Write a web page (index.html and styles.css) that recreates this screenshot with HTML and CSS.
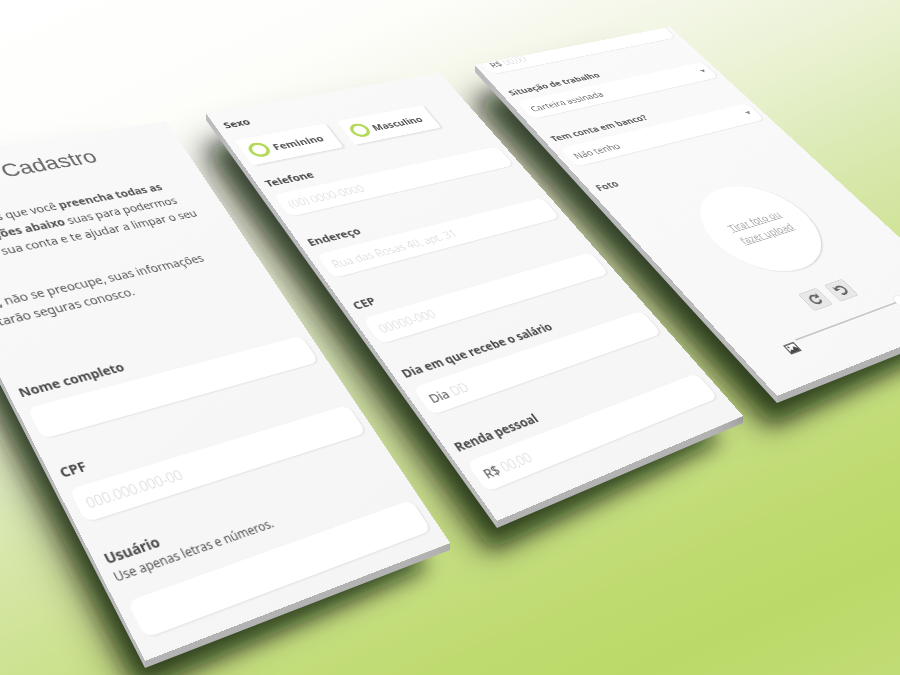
FILE: index.html
```
<!DOCTYPE html>
<html lang="pt-BR">
<head>
<meta charset="utf-8">
<title>Cadastro</title>
<link rel="stylesheet" href="styles.css">
</head>
<body>
<form class="scene">
  <svg class="depth" aria-hidden="true">
    <defs>
      <filter id="soft" x="-20%" y="-20%" width="140%" height="140%"><feGaussianBlur stdDeviation="11"/></filter>
      <filter id="wide" x="-30%" y="-30%" width="160%" height="160%"><feGaussianBlur stdDeviation="20"/></filter>
    </defs>
  </svg>

  <section class="panel panel-intro" data-corners="-109,164 166,121 450,543 145,661">
    <h1 class="title">Cadastro</h1>
    <p class="text">Precisamos que você <b>preencha todas as informações abaixo</b> suas para podermos aprovar sua conta e te ajudar a limpar o seu nome.</p>
    <p class="text"><b>Olá,</b> não se preocupe, suas informações estarão seguras conosco.</p>
    <div class="group">
      <label class="label" for="nome">Nome completo</label>
      <div class="field"><input class="input" id="nome" type="text"></div>
    </div>
    <div class="group">
      <label class="label" for="cpf">CPF</label>
      <div class="field"><input class="input" id="cpf" type="text" placeholder="000.000.000-00"></div>
    </div>
    <div class="group">
      <label class="label" for="usuario">Usuário</label>
      <p class="hint">Use apenas letras e números.</p>
      <div class="field"><input class="input" id="usuario" type="text"></div>
    </div>
  </section>

  <section class="panel panel-data" data-corners="206,113 440,73 743,416 497,521">
    <div class="group" role="radiogroup" aria-labelledby="sexo">
      <span class="label" id="sexo">Sexo</span>
      <div class="choices">
        <label class="choice"><input class="radio" type="radio" name="sexo">Feminino</label>
        <label class="choice"><input class="radio" type="radio" name="sexo">Masculino</label>
      </div>
    </div>
    <div class="group">
      <label class="label" for="telefone">Telefone</label>
      <div class="field"><input class="input" id="telefone" type="text" placeholder="(00) 0000-0000"></div>
    </div>
    <div class="group">
      <label class="label" for="endereco">Endereço</label>
      <div class="field"><input class="input" id="endereco" type="text" placeholder="Rua das Rosas 40, apt. 31"></div>
    </div>
    <div class="group">
      <label class="label" for="cep">CEP</label>
      <div class="field"><input class="input" id="cep" type="text" placeholder="00000-000"></div>
    </div>
    <div class="group">
      <label class="label" for="dia">Dia em que recebe o salário</label>
      <div class="field"><span>Dia</span><input class="input" id="dia" type="text" placeholder="DD"></div>
    </div>
    <div class="group">
      <label class="label" for="renda">Renda pessoal</label>
      <div class="field"><span>R$</span><input class="input" id="renda" type="text" placeholder="00,00"></div>
    </div>
  </section>

  <section class="panel panel-photo" data-corners="475,65 670,27 983,314 777,396">
    <div class="group">
      <div class="field"><span>R$</span><input class="input" type="text" placeholder="00,00" aria-label="Renda"></div>
    </div>
    <div class="group">
      <label class="label" for="trabalho">Situação de trabalho</label>
      <div class="field"><select class="input" id="trabalho"><option>Carteira assinada</option></select><i class="caret"></i></div>
    </div>
    <div class="group">
      <label class="label" for="banco">Tem conta em banco?</label>
      <div class="field"><select class="input" id="banco"><option>Não tenho</option></select><i class="caret"></i></div>
    </div>
    <div class="group">
      <span class="label">Foto</span>
      <button class="photo" type="button">Tirar foto ou fazer upload</button>
      <div class="tools">
        <button class="tool" type="button" aria-label="Girar para a direita">
          <svg viewBox="0 0 16 16"><path d="M13 10.200A5.400 5.400 0 1 1 11.600 4.100" fill="none" stroke="#666" stroke-width="2.400"/><path d="M14.600 1v6.200H8.400z" fill="#666"/></svg>
        </button>
        <button class="tool" type="button" aria-label="Girar para a esquerda">
          <svg viewBox="0 0 16 16"><path d="M4.500 12.200A5.400 5.400 0 1 0 4.400 4.100" fill="none" stroke="#666" stroke-width="2.400"/><path d="M1.400 1v6.200h6.200z" fill="#666"/></svg>
        </button>
      </div>
      <div class="zoom">
        <svg class="zoom-icon" viewBox="0 0 16 14"><path d="M1 1h14v12H1z" fill="#fff" stroke="#444" stroke-width="1.500"/><path d="M2 12.500V10.500l3-2.500 2 1.500L10.500 5 14 9v3.500z" fill="#444"/><circle cx="4.500" cy="4.500" r="1.200" fill="#444"/></svg>
        <input class="slider" type="range" min="0" max="100" value="100" aria-label="Zoom">
      </div>
    </div>
  </section>
</form>
<script src="scene.js"></script>
</body>
</html>
```
FILE: styles.css
```
* {
  box-sizing: border-box;
}

body {
  margin: 0;
  min-height: 100vh;
  overflow: hidden;
  background: linear-gradient(156deg, #fff 0%, #fdfdfa 18%, #f2f6e4 30%, #e9f1d0 39%, #dcebb8 47%, #d5e6a5 54%, #cce28f 64%, #c4de7e 72%, #bfdb70 80%, #bbd968 89%, #c1dc75 100%);
  color: #555;
  font: 14px/23px "Noto Sans", "Open Sans", sans-serif;
}

.scene {
  position: relative;
  min-height: 100vh;
  overflow: hidden;
}

.depth {
  position: absolute;
  inset: 0;
  width: 100%;
  height: 100%;
}

.shadow {
  fill: #080a00;
  fill-opacity: 0.68;
  filter: url(#soft);
}

.haze {
  fill: #101400;
  fill-opacity: 0.36;
  filter: url(#wide);
}

.side {
  fill: #bbbbbd;
}

.base {
  fill: #b3b3b4;
}

.face {
  fill: #f7f7f7;
}

/* Each sheet lies on the tilted plane given by its data-corners. */
.panel {
  position: absolute;
  top: 0;
  left: 0;
  width: 332px;
  height: 596px;
  padding: 16px 10px;
  display: flex;
  flex-direction: column;
  gap: 32px;
  overflow: hidden;
  transform-origin: 0 0;
  background: linear-gradient(160deg, #f9f9f9, #f5f5f5);
}

.panel-intro {
  display: block;
  width: 336px;
  padding: 20px 10px;
}

.panel-photo {
  padding: 0 9px 0 11px;
  background: linear-gradient(160deg, #fafafa, #f7f7f7);
  color: #777;
}

.panel-photo .group:first-child {
  margin-top: -12px;
}

.title {
  margin: 0 0 33px;
  font: 28px/32px "Liberation Sans", Arial, sans-serif;
  text-align: center;
  color: #666;
}

.text {
  margin: 0 12px 16px 0;
}

.panel-intro .group {
  margin-bottom: 29px;
}

.text + .group {
  margin-top: 64px;
}

.label {
  display: block;
  margin-bottom: 8px;
  line-height: 20px;
  font-weight: 700;
  color: #4a4a4a;
}

.panel-photo .label {
  color: #606060;
}

.hint {
  margin: -8px 0 15px;
  font-size: 12px;
  line-height: 18px;
}

.field {
  display: flex;
  align-items: center;
  gap: 4px;
  height: 36px;
  padding: 0 9px;
  border-radius: 9px;
  background: #fff;
  box-shadow: 1px 1px 2px rgba(0, 0, 0, 0.09);
}

.input {
  flex: 1;
  min-width: 0;
  padding: 0;
  border: 0;
  outline: 0;
  appearance: none;
  background: none;
  color: inherit;
  font: inherit;
}

.input::placeholder {
  color: #d6d6d6;
  font-weight: 300;
  opacity: 1;
}

.caret {
  border: 4px solid transparent;
  border-top: 6px solid #888;
  border-bottom: 0;
}

.choices {
  display: flex;
  gap: 16px;
  margin: 16px 0 -10px;
}

.choice {
  display: flex;
  align-items: center;
  gap: 6px;
  height: 44px;
  padding: 0 16px 0 8px;
  border-radius: 4px;
  background: #fff;
  box-shadow: 2px 2px 3px rgba(0, 0, 0, 0.1);
  font-weight: 700;
}

.radio {
  appearance: none;
  width: 24px;
  height: 24px;
  margin: 0;
  border: 4px solid #b4d957;
  border-radius: 50%;
}

.photo {
  display: block;
  width: 148px;
  height: 148px;
  margin: 41px auto 31px;
  padding: 0 30px;
  border: 0;
  border-radius: 50%;
  background: #fff;
  box-shadow: 1px 1px 2px rgba(0, 0, 0, 0.16);
  color: #aaa;
  font: inherit;
  text-decoration: underline;
}

.tools {
  display: flex;
  justify-content: center;
  gap: 12px;
}

.tool {
  display: grid;
  place-items: center;
  width: 30px;
  height: 28px;
  padding: 0;
  border: 1px solid #d2d2d2;
  border-radius: 3px;
  background: #e8e8e8;
}

.tool svg {
  width: 18px;
  height: 18px;
}

.zoom {
  display: flex;
  align-items: flex-start;
  gap: 4px;
  margin: 18px 68px 0 46px;
}

.zoom-icon {
  flex: none;
  width: 16px;
  height: 14px;
  margin-top: 9px;
}

.slider {
  flex: 1;
  min-width: 0;
  height: 16px;
  margin: 0;
  appearance: none;
  background: linear-gradient(#c6c6c6, #c6c6c6) center / 100% 2px no-repeat;
}

.slider::-webkit-slider-thumb {
  appearance: none;
  width: 16px;
  height: 16px;
  border-radius: 50%;
  background: #fff;
  box-shadow: 0 0 2px rgba(0, 0, 0, 0.2);
}
```
FILE: scene.js
```
const DESIGN_WIDTH = 900;
const THICKNESS = 7;
const SHADOW = [[-2, 34], [-30, 34], [-22, 26], [-6, 30]];
const HAZE = [[-14, 40], [-50, 40], [-60, 26], [-14, 30]];
const depth = document.querySelector('.depth');

// matrix3d that carries a w x h box onto the quad TL, TR, BR, BL
function quadMatrix([[x0, y0], [x1, y1], [x2, y2], [x3, y3]], w, h) {
  const dx1 = x1 - x2, dx2 = x3 - x2, sx = x0 - x1 + x2 - x3;
  const dy1 = y1 - y2, dy2 = y3 - y2, sy = y0 - y1 + y2 - y3;
  const det = dx1 * dy2 - dx2 * dy1;
  const g = (sx * dy2 - dx2 * sy) / det, k = (dx1 * sy - sx * dy1) / det;
  const a = x1 - x0 + g * x1, b = x3 - x0 + k * x3;
  const d = y1 - y0 + g * y1, e = y3 - y0 + k * y3;
  return `matrix3d(${[a / w, d / w, 0, g / w, b / h, e / h, 0, k / h, 0, 0, 1, 0, x0, y0, 0, 1].join()})`;
}

function polygon(name, points) {
  const node = document.createElementNS('http://www.w3.org/2000/svg', 'polygon');
  node.setAttribute('class', name);
  node.setAttribute('points', points.join(' '));
  depth.append(node);
}

function layout() {
  const scale = window.innerWidth / DESIGN_WIDTH;
  depth.querySelectorAll('polygon').forEach(node => node.remove());
  document.querySelectorAll('.panel').forEach(panel => {
    const quad = panel.dataset.corners.split(' ').map(p => p.split(',').map(n => n * scale));
    const down = ([x, y]) => [x, y + THICKNESS * scale];
    const cast = offsets => quad.map(([x, y], i) => [x + offsets[i][0] * scale, y + offsets[i][1] * scale]);
    const [tl, , br, bl] = quad;
    polygon('haze', cast(HAZE));
    polygon('shadow', cast(SHADOW));
    polygon('side', [tl, bl, down(bl), down(tl)]);
    polygon('base', [bl, br, down(br), down(bl)]);
    polygon('face', quad);
    panel.style.transform = quadMatrix(quad, panel.offsetWidth, panel.offsetHeight);
  });
}

window.addEventListener('resize', layout);
layout();
```
